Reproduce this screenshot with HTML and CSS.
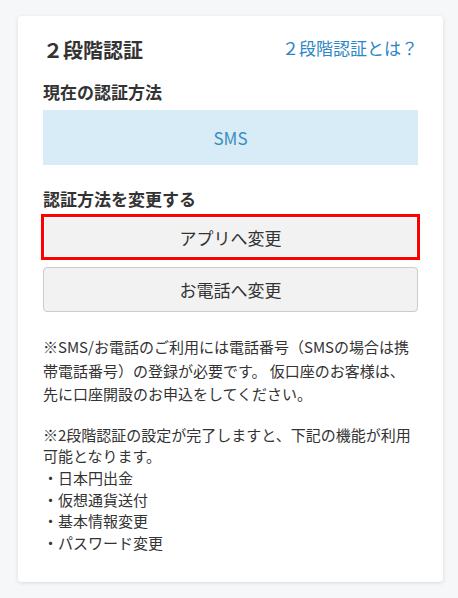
FILE: index.html
```html
<!DOCTYPE html>
<html lang="ja">
<head>
    <meta charset="UTF-8">
    <meta name="viewport" content="width=device-width, initial-scale=1.0">
    <title>２段階認証</title>
    <link rel="stylesheet" href="styles.css">
</head>
<body>
    <div class="card">
        <div class="card-header">
            <h1 class="card-title">２段階認証</h1>
            <a href="#" class="help-link">２段階認証とは？</a>
        </div>

        <!-- Current method -->
        <h2 class="section-title current-title">現在の認証方法</h2>
        <div class="current-method">SMS</div>

        <!-- Change method -->
        <h2 class="section-title change-title">認証方法を変更する</h2>
        <button type="button" class="btn btn-selected">アプリへ変更</button>
        <button type="button" class="btn btn-phone">お電話へ変更</button>

        <p class="note">※SMS/お電話のご利用には電話番号（SMSの場合は携帯電話番号）の登録が必要です。 仮口座のお客様は、先に口座開設のお申込をしてください。</p>
        <div class="note note-list">
            <p>※2段階認証の設定が完了しますと、下記の機能が利用可能となります。</p>
            <ul>
                <li>・日本円出金</li>
                <li>・仮想通貨送付</li>
                <li>・基本情報変更</li>
                <li>・パスワード変更</li>
            </ul>
        </div>
    </div>
</body>
</html>
```

FILE: styles.css
```css
:root {
    --text-color: #333333;
    --link-color: #2b86c6;
    --info-background: #d7ecf6;
    --info-text: #3c8ec0;
    --button-background: #f2f2f2;
    --border-color: #cccccc;
}

body {
    margin: 0;
    padding: 16px 15px 16px 18px;
    background-color: #f6f7f9;
    color: var(--text-color);
    font-family: "Noto Sans CJK JP", "Noto Sans", sans-serif;
}

.card {
    background-color: #ffffff;
    border-radius: 4px;
    box-shadow: 0 1px 4px rgba(0, 0, 0, 0.12);
    padding: 20px 25px 28px;
    display: flex;
    flex-direction: column;
}

.card-header {
    display: flex;
    justify-content: space-between;
    align-items: flex-start;
}

.card-title {
    margin: 0;
    font-size: 20px;
    line-height: 28px;
    font-weight: bold;
}

.help-link {
    font-size: 17px;
    line-height: 24px;
    color: var(--link-color);
    text-decoration: none;
}

.section-title {
    margin: 0;
    font-size: 17px;
    line-height: 24px;
    font-weight: bold;
}

.current-title {
    margin-top: 16px;
}

.current-method {
    margin-top: 6px;
    height: 55px;
    display: flex;
    align-items: center;
    justify-content: center;
    background-color: var(--info-background);
    color: var(--info-text);
    font-size: 17px;
}

.change-title {
    margin-top: 22px;
}

.btn {
    font-family: inherit;
    font-size: 17px;
    color: var(--text-color);
    background-color: var(--button-background);
    cursor: pointer;
    padding: 0;
}

.btn-selected {
    margin: 6px 1px 0;
    height: 40px;
    border: 1px solid #ffffff;
    outline: 3px solid #ff0000;
}

.btn-phone {
    margin-top: 10px;
    height: 45px;
    border: 1px solid var(--border-color);
    border-radius: 4px;
}

.note {
    margin: 23px 0 0;
    font-size: 15px;
    line-height: 23.5px;
}

.note-list {
    margin-top: 18px;
    line-height: 21.7px;
}

.note-list p {
    margin: 0;
}

.note-list ul {
    margin: 0;
    padding: 0;
    list-style: none;
}
```
